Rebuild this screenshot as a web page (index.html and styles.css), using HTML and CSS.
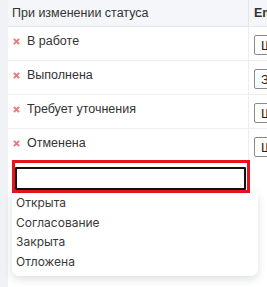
FILE: index.html
```html
<!DOCTYPE html>
<html lang="ru">
<head>
  <meta charset="UTF-8">
  <title>Уведомления</title>
  <link rel="stylesheet" href="styles.css">
</head>
<body>
  <div class="panel">
    <table class="rules">
      <thead>
        <tr>
          <th class="col-status">При изменении статуса</th>
          <th class="col-mail">Email шаблон</th>
        </tr>
      </thead>
      <tbody>
        <tr>
          <td><svg class="remove" viewBox="0 0 8 8"><path d="M1 1L7 7M7 1L1 7"/></svg>В работе</td>
          <td><select class="tpl"><option>Шаблон по умолчанию</option></select></td>
        </tr>
        <tr>
          <td><svg class="remove" viewBox="0 0 8 8"><path d="M1 1L7 7M7 1L1 7"/></svg>Выполнена</td>
          <td><select class="tpl"><option>Завершение заявки</option></select></td>
        </tr>
        <tr>
          <td><svg class="remove" viewBox="0 0 8 8"><path d="M1 1L7 7M7 1L1 7"/></svg>Требует уточнения</td>
          <td><select class="tpl"><option>Шаблон по умолчанию</option></select></td>
        </tr>
        <tr class="last">
          <td><svg class="remove" viewBox="0 0 8 8"><path d="M1 1L7 7M7 1L1 7"/></svg>Отменена</td>
          <td><select class="tpl"><option>Шаблон по умолчанию</option></select></td>
        </tr>
      </tbody>
    </table>

    <div class="add-status">
      <input type="text" class="add-input">
    </div>
    <ul class="dropdown">
      <li>Открыта</li>
      <li>Согласование</li>
      <li>Закрыта</li>
      <li>Отложена</li>
    </ul>
  </div>
</body>
</html>
```

FILE: styles.css
```css
body {
  margin: 0;
  background-color: #f0f2f5;
  font-family: 'Liberation Sans', Arial, sans-serif;
  font-size: 12px;
  color: #333;
  overflow: hidden;
  height: 287px;
}

.panel {
  margin-left: 8px;
  width: 460px;
  height: 287px;
  background-color: #fff;
}

.rules {
  border-collapse: collapse;
  table-layout: fixed;
  width: 460px;
}

.rules th {
  height: 26px;
  padding: 0 0 0 4px;
  text-align: left;
  font-weight: normal;
  font-size: 12.5px;
  background-color: #f5f6f9;
  border-bottom: 1px solid #e3e6eb;
}

.col-status {
  width: 236px;
  border-right: 1px solid #e3e6eb;
}

.rules th.col-mail {
  padding-left: 5px;
  font-weight: bold;
}

.rules td {
  height: 26px;
  padding: 7px 0 0 5px;
  line-height: 14px;
  font-size: 12.5px;
  vertical-align: top;
  border-bottom: 1px solid #eceef2;
}

.rules td:first-child {
  border-right: 1px solid #eceef2;
}

.rules tr.last td {
  height: 24px;
  border-bottom: none;
}

.remove {
  display: inline-block;
  width: 7px;
  height: 7px;
  margin: 0 7px 0 0;
  vertical-align: 0;
  stroke: #e57f7f;
  stroke-width: 2.4;
  fill: none;
}

.tpl {
  height: 20px;
  width: 180px;
  margin: 1px 0 0 0;
  border: 1px solid #8a8a8a;
  border-radius: 2px;
  background: #fff;
  font-family: 'Liberation Sans', Arial, sans-serif;
  font-size: 13px;
  color: #222;
  padding: 0 2px;
}

.add-status {
  width: 231px;
  margin-left: 4px;
  padding: 4px 1px 0 0;
  border: 3px solid #e8141c;
}

.add-input {
  display: block;
  box-sizing: border-box;
  width: 100%;
  height: 23px;
  margin: 0;
  border: 2px solid #111;
  border-radius: 1px;
  outline: none;
}

.dropdown {
  list-style: none;
  margin: 0 0 0 4px;
  padding: 0 0 4px 0;
  width: 246px;
  background: #fff;
  border-radius: 0 0 7px 7px;
  box-shadow: 0 3px 8px rgba(40, 50, 80, 0.16);
  font-family: Inter, sans-serif;
  font-size: 12px;
  color: #3a3a3a;
}

.dropdown li {
  height: 19.7px;
  line-height: 19.7px;
  padding-left: 4px;
}
```
